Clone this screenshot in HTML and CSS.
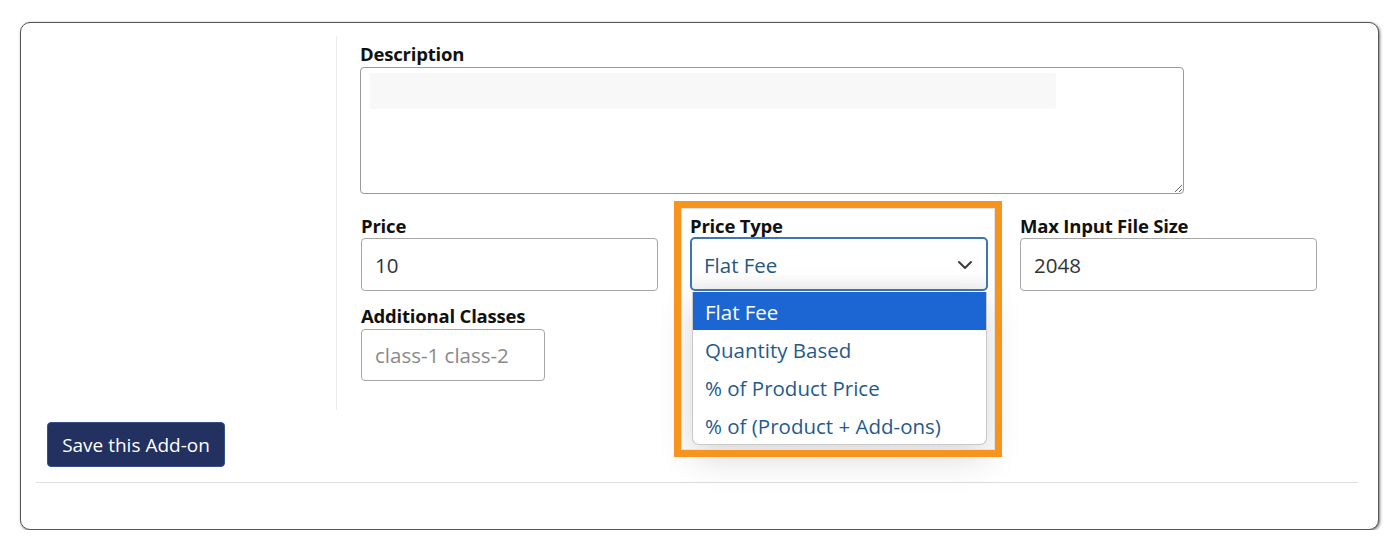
FILE: index.html
```html
<!DOCTYPE html>
<html lang="en">
<head>
<meta charset="utf-8">
<title>Add-on</title>
<link rel="stylesheet" href="styles.css">
</head>
<body>
<div class="card">
  <div class="main">
    <div class="side"></div>
    <div class="form">
      <div class="field">
        <label class="lbl">Description</label>
        <div class="ta-wrap">
          <textarea class="textarea"></textarea>
          <div class="redact"></div>
        </div>
      </div>
      <div class="grid">
        <div class="field">
          <label class="lbl">Price</label>
          <input class="input" type="text" value="10">
        </div>
        <div class="field hl">
          <label class="lbl">Price Type</label>
          <div class="select">
            <span class="sel-val">Flat Fee</span>
            <svg class="chev" width="16" height="10" viewBox="0 0 16 10"><path d="M2 2l6 6 6-6" fill="none" stroke="#3a3a3a" stroke-width="2" stroke-linecap="round" stroke-linejoin="round"/></svg>
          </div>
          <ul class="menu">
            <li class="on">Flat Fee</li>
            <li>Quantity Based</li>
            <li>% of Product Price</li>
            <li>% of (Product + Add-ons)</li>
          </ul>
          <div class="frame"></div>
        </div>
        <div class="field">
          <label class="lbl">Max Input File Size</label>
          <input class="input" type="text" value="2048">
        </div>
        <div class="field">
          <label class="lbl">Additional Classes</label>
          <input class="input small" type="text" placeholder="class-1 class-2">
        </div>
      </div>
    </div>
  </div>
  <div class="actions">
    <button class="btn" type="button">Save this Add-on</button>
  </div>
  <div class="rule"></div>
</div>
</body>
</html>
```

FILE: styles.css
```css
* { box-sizing: border-box; }
html, body { margin: 0; padding: 0; background: #fff; }
body {
  font-family: "Open Sans", "Noto Sans", "Liberation Sans", sans-serif;
  color: #111;
}
.card {
  margin: 22px 21px 0 20px;
  height: 508px;
  border: 1px solid #555;
  border-radius: 10px;
  box-shadow: 1px 1px 3px rgba(0,0,0,0.55);
  padding: 13px 20px 0 15px;
  background: #fff;
}
.main { display: flex; }
.side { width: 301px; border-right: 1px solid #ececec; flex: none; }
.form { padding: 7px 0 29px 23px; flex: 1; }
.field { display: flex; flex-direction: column; }
.lbl {
  font-weight: 700;
  font-size: 18.5px;
  line-height: 21px;
  margin-bottom: 2px;
  color: #111;
  letter-spacing: -0.2px;
}
.ta-wrap { position: relative; width: 824px; height: 127px; margin-top: 1px; }
.textarea {
  display: block;
  width: 824px;
  height: 127px;
  border: 1px solid #9a9a9a;
  border-radius: 4px;
  resize: vertical;
  background: #fff;
  font: inherit;
  margin: 0;
}
.redact {
  position: absolute;
  left: 10px;
  top: 6px;
  width: 686px;
  height: 36px;
  background: #f8f8f8;
  border-radius: 2px;
}
.grid {
  display: grid;
  grid-template-columns: 297px 298px 297px;
  column-gap: 32px;
  row-gap: 14px;
  margin-top: 21px;
  margin-left: 1px;
}
.input {
  width: 100%;
  height: 53px;
  border: 1px solid #a6a6a6;
  border-radius: 4px;
  padding: 0 13px;
  font-family: inherit;
  font-size: 20.5px;
  color: #333;
  background: #fff;
  margin: 0;
  outline: none;
}
.input.small { width: 184px; height: 52px; margin-top: 1px; }
.input::placeholder { color: #8a8a8a; }
.hl { position: relative; }
.select {
  height: 54px;
  border: 2px solid #3d77b2;
  border-radius: 5px;
  display: flex;
  align-items: center;
  justify-content: space-between;
  padding: 0 13px 0 12px;
  font-size: 20.5px;
  color: #2a567f;
  background: linear-gradient(#fff 70%, #f3f3f3);
  margin-top: -1px;
}
.sel-val { padding-top: 2px; }
.chev { margin-top: 2px; }
.menu {
  position: absolute;
  left: 2px;
  top: 77px;
  width: 295px;
  margin: 0;
  padding: 0;
  list-style: none;
  background: #fff;
  border: 1px solid #c9c9c9;
  border-top: none;
  border-radius: 0 0 7px 7px;
  box-shadow: 0 12px 36px rgba(0,0,0,0.16);
  z-index: 1;
  overflow: hidden;
}
.menu li {
  height: 38px;
  line-height: 36px;
  padding: 2px 0 0 12px;
  font-size: 20.5px;
  color: #1f5b8f;
}
.menu li.on { background: #1b66d2; color: #fff; }
.frame {
  position: absolute;
  left: -16px;
  top: -14px;
  width: 328px;
  height: 256px;
  border: 7px solid #f7941d;
  box-shadow: inset 0 0 0 1px #e2e2e2;
  z-index: 2;
  pointer-events: none;
}
.actions { padding: 12px 0 0 11px; }
.btn {
  display: block;
  width: 178px;
  height: 45px;
  background: #22315f;
  color: #fff;
  border: 1px solid #35528c;
  border-radius: 4px;
  font-family: inherit;
  font-size: 19px;
  padding: 0;
}
.rule { margin-top: 15px; border-top: 1px solid #dedede; }
```
